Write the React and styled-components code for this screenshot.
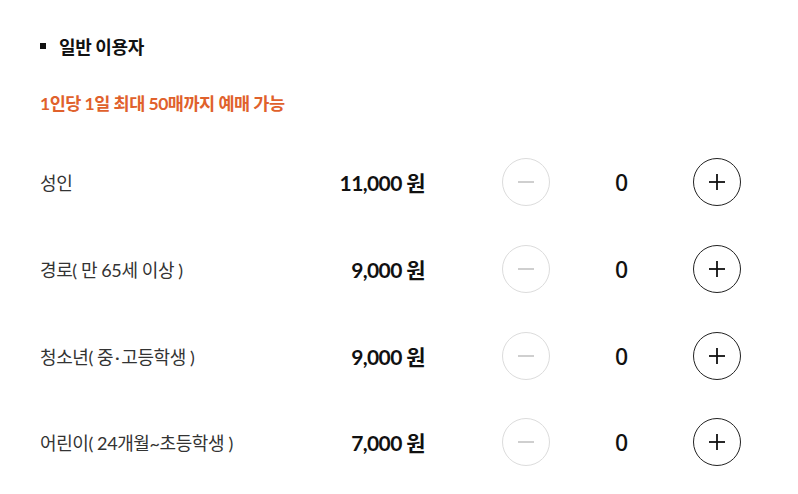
import React from "react";
import styled, { createGlobalStyle } from "styled-components";

const Global = createGlobalStyle`
  html, body { margin: 0; padding: 0; background: #fff; }
  body { font-family: Lato, "Noto Sans CJK KR", sans-serif; color: #222; }
`;

const Page = styled.div`
  width: 798px;
  padding: 34px 0 0 40px;
  box-sizing: border-box;
`;

const Title = styled.h2`
  margin: 0;
  display: flex;
  align-items: center;
  gap: 13px;
  font-size: 18px;
  font-weight: 700;
  line-height: 24px;
  color: #111;
  font-family: "Noto Sans CJK KR", sans-serif;
  letter-spacing: -0.3px;
  &::before {
    content: "";
    width: 6px;
    height: 6px;
    background: #111;
  }
`;

const Notice = styled.p`
  margin: 34px 0 0 0;
  font-size: 17.5px;
  line-height: 24px;
  font-weight: 700;
  color: #e0612c;
  font-family: Lato, "Noto Sans CJK KR", sans-serif;
  letter-spacing: -0.5px;
`;

const List = styled.div`
  margin-top: 23px;
  width: 701px;
  display: flex;
  flex-direction: column;
`;

const Row = styled.div`
  height: 86.7px;
  display: flex;
  align-items: center;
`;

const Label = styled.div`
  flex: 1;
  font-size: 18px;
  font-weight: 400;
  color: #333;
  letter-spacing: -0.4px;
  font-family: Lato, "Noto Sans CJK KR", sans-serif;
`;

const Price = styled.div`
  font-size: 21px;
  font-weight: 700;
  color: #111;
  letter-spacing: -0.6px;
  margin-right: 77px;
  font-family: Lato, "Noto Sans CJK KR", sans-serif;
`;

const CircleButton = styled.button`
  width: 48px;
  height: 48px;
  border-radius: 50%;
  border: 1px solid ${(p) => (p.$disabled ? "#dcdcdc" : "#222")};
  background: #fff;
  padding: 0;
  display: flex;
  align-items: center;
  justify-content: center;
  cursor: ${(p) => (p.$disabled ? "default" : "pointer")};
  svg { display: block; }
`;

const Count = styled.div`
  width: 143px;
  text-align: center;
  font-size: 23px;
  font-weight: 500;
  font-family: "Noto Sans", sans-serif;
  color: #111;
`;

const rows = [
  { label: "성인", price: "11,000" },
  { label: "경로( 만 65세 이상 )", price: "9,000" },
  { label: "청소년( 중\u2009·\u2009고등학생 )", price: "9,000" },
  { label: "어린이( 24개월~초등학생 )", price: "7,000" },
];

const Minus = () => (
  <svg width="16" height="16" viewBox="0 0 16 16">
    <line x1="0" y1="8" x2="16" y2="8" stroke="#cfcfcf" strokeWidth="2" />
  </svg>
);

const Plus = () => (
  <svg width="16" height="16" viewBox="0 0 16 16">
    <line x1="0" y1="8" x2="16" y2="8" stroke="#111" strokeWidth="1.8" />
    <line x1="8" y1="0" x2="8" y2="16" stroke="#111" strokeWidth="1.8" />
  </svg>
);

export default function App() {
  return (
    <>
      <Global />
      <Page>
        <Title>일반 이용자</Title>
        <Notice>1인당 1일 최대 50매까지 예매 가능</Notice>
        <List>
          {rows.map((r) => (
            <Row key={r.label}>
              <Label>{r.label}</Label>
              <Price>{r.price} 원</Price>
              <CircleButton $disabled aria-label="감소">
                <Minus />
              </CircleButton>
              <Count>0</Count>
              <CircleButton aria-label="증가">
                <Plus />
              </CircleButton>
            </Row>
          ))}
        </List>
      </Page>
    </>
  );
}
